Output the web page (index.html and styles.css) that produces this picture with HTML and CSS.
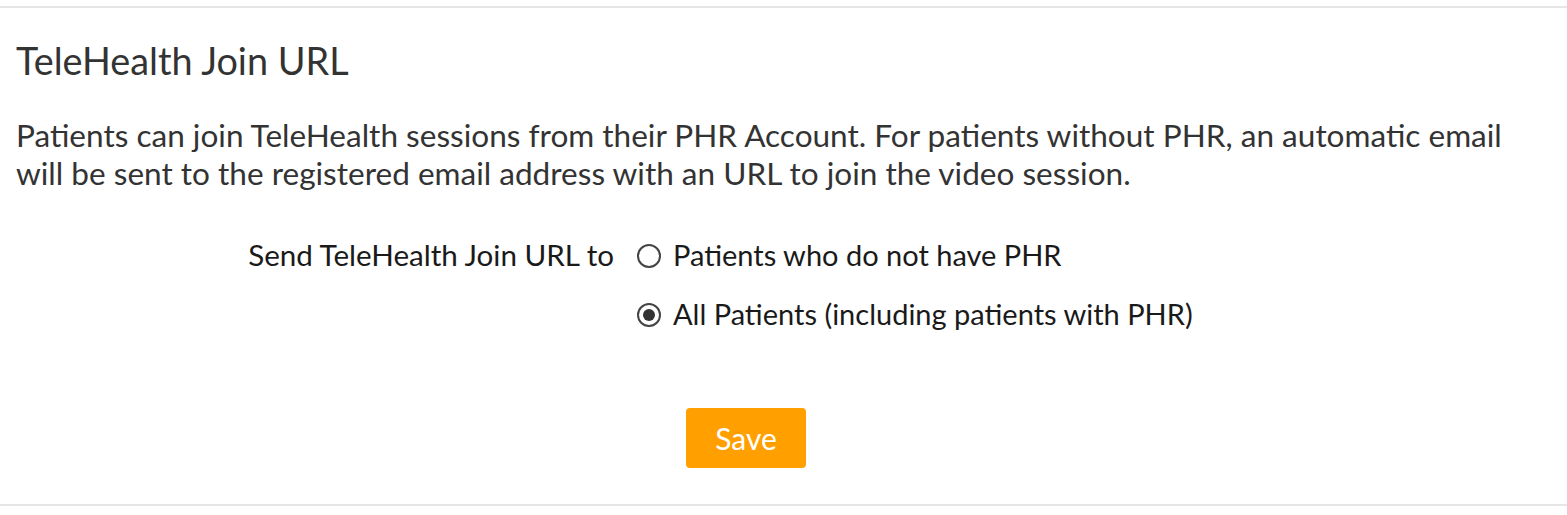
FILE: index.html
```html
<!DOCTYPE html>
<html>
<head>
<meta charset="utf-8">
<link rel="stylesheet" href="styles.css">
</head>
<body>
<section class="panel">
  <h2 class="title">TeleHealth Join URL</h2>
  <p class="desc">Patients can join TeleHealth sessions from their PHR Account. For patients without PHR, an automatic email will be sent to the registered email address with an URL to join the video session.</p>
  <div class="form-row">
    <div class="label">Send TeleHealth Join URL to</div>
    <div class="options">
      <label class="option"><span class="radio"></span>Patients who do not have PHR</label>
      <label class="option"><span class="radio checked"></span>All Patients (including patients with PHR)</label>
    </div>
  </div>
  <div class="actions">
    <button class="save">Save</button>
  </div>
</section>
</body>
</html>
```
FILE: styles.css
```css
html, body {
  margin: 0;
  padding: 0;
  background: #fff;
}
body {
  padding-top: 6px;
  font-family: Lato, "Noto Sans", sans-serif;
}
.panel {
  border-top: 2px solid #e6e6e6;
  border-bottom: 2px solid #e6e6e6;
  padding: 0 16px;
  height: 500px;
  box-sizing: border-box;
}
.title {
  margin: 0;
  padding-top: 33px;
  font-size: 37.8px;
  font-weight: 400;
  color: #333;
  line-height: 40px;
}
.desc {
  margin: 35px 0 0;
  font-size: 31.55px;
  line-height: 38px;
  color: #333;
  width: 1530px;
}
.form-row {
  display: flex;
  margin-top: 44px;
}
.label {
  width: 621px;
  text-align: right;
  font-size: 29.6px;
  line-height: 38px;
  color: #1a1a1a;
  padding-right: 23px;
  box-sizing: border-box;
}
.options {
  display: flex;
  flex-direction: column;
  gap: 21px;
}
.option {
  display: flex;
  align-items: center;
  font-size: 29px;
  line-height: 38px;
  color: #1a1a1a;
}
.radio {
  width: 20px;
  height: 20px;
  border: 2px solid #444;
  border-radius: 50%;
  margin: 2px 12px 0 0;
  box-sizing: content-box;
  display: flex;
  align-items: center;
  justify-content: center;
}
.radio.checked::after {
  content: "";
  width: 12px;
  height: 12px;
  border-radius: 50%;
  background: #333;
}
.actions {
  display: flex;
  padding-left: 670px;
  margin-top: 75px;
}
.save {
  width: 120px;
  height: 60px;
  background: #ffa000;
  border: none;
  border-radius: 4px;
  color: #fff;
  font-family: Lato, "Noto Sans", sans-serif;
  font-size: 30px;
  padding: 0;
}
```
